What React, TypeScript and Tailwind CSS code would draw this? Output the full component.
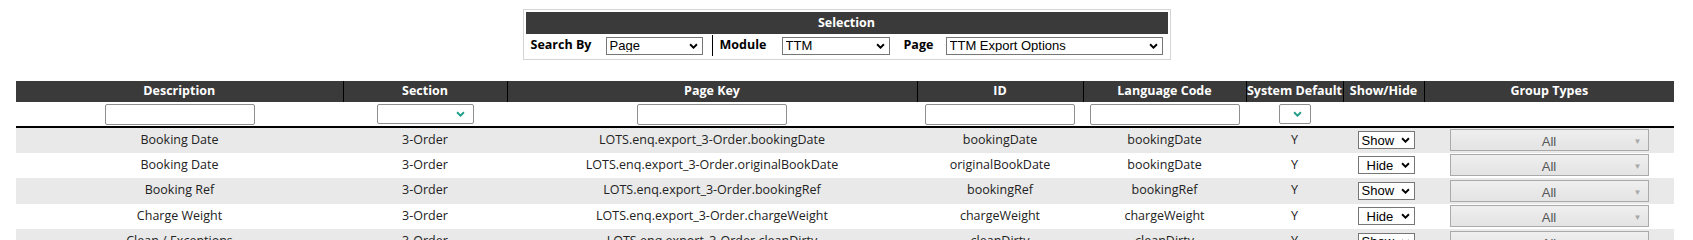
import React from "react";

type Row = {
  desc: string;
  section: string;
  pageKey: string;
  id: string;
  lang: string;
  sysDefault: string;
  show: string;
};

const rows: Row[] = [
  { desc: "Booking Date", section: "3-Order", pageKey: "LOTS.enq.export_3-Order.bookingDate", id: "bookingDate", lang: "bookingDate", sysDefault: "Y", show: "Show" },
  { desc: "Booking Date", section: "3-Order", pageKey: "LOTS.enq.export_3-Order.originalBookDate", id: "originalBookDate", lang: "bookingDate", sysDefault: "Y", show: "Hide" },
  { desc: "Booking Ref", section: "3-Order", pageKey: "LOTS.enq.export_3-Order.bookingRef", id: "bookingRef", lang: "bookingRef", sysDefault: "Y", show: "Show" },
  { desc: "Charge Weight", section: "3-Order", pageKey: "LOTS.enq.export_3-Order.chargeWeight", id: "chargeWeight", lang: "chargeWeight", sysDefault: "Y", show: "Hide" },
  { desc: "Clean / Exceptions", section: "3-Order", pageKey: "LOTS.enq.export_3-Order.cleanDirty", id: "cleanDirty", lang: "cleanDirty", sysDefault: "Y", show: "Show" },
  { desc: "Collection Date", section: "3-Order", pageKey: "LOTS.enq.export_3-Order.collectionDate", id: "collectionDate", lang: "collectionDate", sysDefault: "Y", show: "Show" },
];

const columns = [
  { title: "Description", width: "w-[327px]" },
  { title: "Section", width: "w-[164px]" },
  { title: "Page Key", width: "w-[410px]" },
  { title: "ID", width: "w-[166px]" },
  { title: "Language Code", width: "w-[163px]" },
  { title: "System Default", width: "w-[97px]" },
  { title: "Show/Hide", width: "w-[81px]" },
  { title: "Group Types", width: "w-[250px]" },
];

function Chevron({ className }: { className?: string }) {
  return (
    <svg viewBox="0 0 10 7" className={className} fill="none" stroke="currentColor" strokeWidth="2.2">
      <path d="M1 1.5l4 4 4-4" />
    </svg>
  );
}

// plain select with the black windows chevron
function Dropdown({ value, className, inset }: { value: string; className: string; inset?: boolean }) {
  return (
    <div className={`relative h-[18px] ${className}`}>
      <select
        defaultValue={value}
        className={`appearance-none w-full h-full border border-[#767676] bg-white pr-[16px] text-[13px] leading-none font-normal text-black font-['Liberation_Sans',Arial,sans-serif] outline-none ${inset ? "pl-[8px]" : "pl-[3px]"}`}
      >
        <option>{value}</option>
      </select>
      <Chevron className="pointer-events-none absolute right-[5px] top-[6px] w-[9px] h-[6px] text-black" />
    </div>
  );
}

// filter selects with the teal arrow
function FilterSelect({ className }: { className: string }) {
  return (
    <div className={`relative h-[20px] ${className}`}>
      <select className="appearance-none w-full h-full border border-[#8f8f8f] rounded-[2px] bg-white outline-none">
        <option></option>
      </select>
      <Chevron className="pointer-events-none absolute right-[9px] top-[7px] w-[9px] h-[6px] text-[#1f9e8a]" />
    </div>
  );
}

function FilterInput() {
  return <input type="text" className="w-[150px] h-[21px] border border-[#8f8f8f] rounded-[2px] bg-white outline-none" />;
}

function GroupSelect() {
  return (
    <div className="relative mx-auto flex items-center justify-center w-[199px] h-[22px] border border-[#aaaaaa] bg-gradient-to-b from-[#efefef] via-[#e9e9e9] to-[#e4e4e4] text-[13px] text-[#555] font-['Liberation_Sans',Arial,sans-serif]">
      <span className="pt-[3px]">All</span>
      <span className="absolute right-[6px] top-[6px] text-[8px] text-[#a8a8a8]">▼</span>
    </div>
  );
}

export default function App() {
  return (
    <div className="min-h-screen bg-white pb-10 font-['Open_Sans','Noto_Sans',sans-serif] text-[12.5px] text-[#222]">
      {/* Selection */}
      <div className="flex justify-center pt-[9px]">
        <div className="w-[648px] border border-[#d4d4d4] p-[2px]">
          <div className="h-[22px] bg-[#3a3a3a] text-white font-bold flex items-center justify-center">Selection</div>
          <div className="flex items-center h-[23px] pl-[5px] font-bold text-black">
            <span className="w-[75px]">Search By</span>
            <Dropdown value="Page" className="w-[97px]" />
            <span className="ml-[9px] w-px h-[21px] bg-black" />
            <span className="ml-[7px] w-[62px]">Module</span>
            <Dropdown value="TTM" className="w-[108px]" />
            <span className="ml-[14px] w-[42px]">Page</span>
            <Dropdown value="TTM Export Options" className="w-[217px]" />
          </div>
        </div>
      </div>

      {/* Grid */}
      <table className="table-fixed border-collapse ml-[16px] mt-[21px] w-[1658px]">
        <colgroup>
          {columns.map((c) => (
            <col key={c.title} className={c.width} />
          ))}
        </colgroup>
        <thead>
          <tr className="h-[21px] bg-[#3a3a3a] text-white">
            {columns.map((c, i) => (
              <th key={c.title} className={`p-0 font-bold text-center whitespace-nowrap ${i > 0 ? "border-l border-black" : ""}`}>
                {c.title}
              </th>
            ))}
          </tr>
          <tr className="h-[25px] bg-white">
            <th className="p-0 border-b-2 border-black"><div className="flex justify-center"><FilterInput /></div></th>
            <th className="p-0 border-b-2 border-black"><div className="flex justify-center"><FilterSelect className="w-[97px]" /></div></th>
            <th className="p-0 border-b-2 border-black"><div className="flex justify-center"><FilterInput /></div></th>
            <th className="p-0 border-b-2 border-black"><div className="flex justify-center"><FilterInput /></div></th>
            <th className="p-0 border-b-2 border-black"><div className="flex justify-center"><FilterInput /></div></th>
            <th className="p-0 border-b-2 border-black"><div className="flex justify-center"><FilterSelect className="w-[32px]" /></div></th>
            <th className="p-0 border-b-2 border-black" />
            <th className="p-0 border-b-2 border-black" />
          </tr>
        </thead>
        <tbody>
          {rows.map((r, i) => (
            <tr key={r.pageKey} className={`h-[25.5px] ${i % 2 === 0 ? "bg-[#e9e9e9]" : "bg-white"}`}>
              <td className="p-0 text-center">{r.desc}</td>
              <td className="p-0 text-center">{r.section}</td>
              <td className="p-0 text-center">{r.pageKey}</td>
              <td className="p-0 text-center">{r.id}</td>
              <td className="p-0 text-center">{r.lang}</td>
              <td className="p-0 text-center">{r.sysDefault}</td>
              <td className="p-0">
                <div className="flex justify-center pl-[5px]">
                  <Dropdown value={r.show} className="w-[57px]" inset={r.show === "Hide"} />
                </div>
              </td>
              <td className="p-0">
                <GroupSelect />
              </td>
            </tr>
          ))}
        </tbody>
      </table>
    </div>
  );
}
